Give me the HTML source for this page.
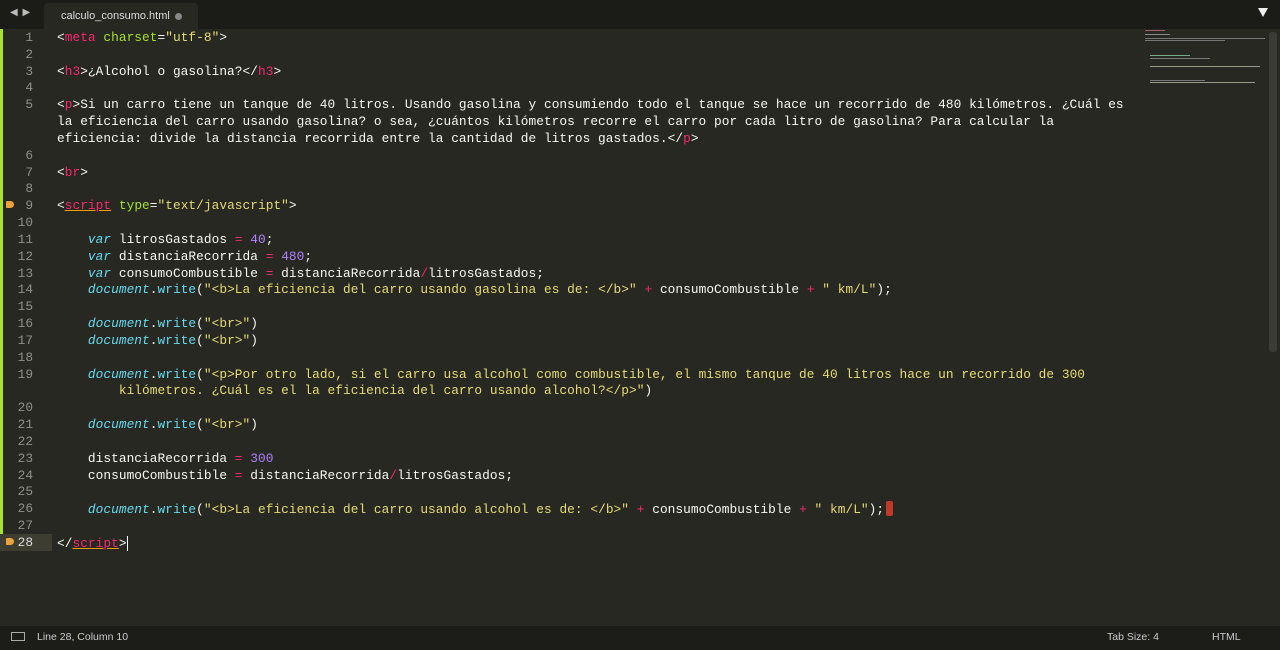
<!DOCTYPE html>
<html><head><meta charset="utf-8"><style>
body{margin:0;width:1280px;height:650px;background:#272822;overflow:hidden;position:relative;font-family:"Liberation Sans",sans-serif}
#tabs{position:absolute;left:0;top:0;width:1280px;height:29px;background:#1b1b18}
#tab{position:absolute;left:44px;top:3px;width:154px;height:26px;background:#272822;border-radius:4px 4px 0 0;color:#ddd;font-size:11px;line-height:26px}
#tab span{position:absolute;left:17px}
#tab i{position:absolute;left:131px;top:10px;width:7px;height:7px;border-radius:50%;background:#888}
#arr{position:absolute;left:10px;top:7px;color:#bbb;font-size:10px;letter-spacing:1px}
#dd{position:absolute;left:1258px;top:8px;width:0;height:0;border-left:5px solid transparent;border-right:5px solid transparent;border-top:9px solid #eee}
#green{position:absolute;left:0;top:29px;width:3px;height:521px;background:#a6e22e}
#gut{position:absolute;left:0;top:30px;width:33px;text-align:right;color:#8f908a;font:12.8px/16.83px "Liberation Mono",monospace;white-space:pre}
#code{position:absolute;left:57px;top:30px;color:#f8f8f2;font:12.8px/16.83px "Liberation Mono",monospace;white-space:pre;letter-spacing:0.05px}
.t{color:#f92672}.a{color:#a6e22e}.s{color:#e6db74}.n{color:#ae81ff}.k{color:#66d9ef;font-style:italic}.o{color:#f92672}
.u{text-decoration:underline;text-decoration-color:#e6a000}
.cur{display:inline-block;width:7px;height:15px;background:#c0392b;border-radius:2px;vertical-align:-3px;margin-left:2px}
#hl{position:absolute;left:0;top:534px;width:52px;height:17px;background:#3e3d32}
.tag{position:absolute;width:8px;height:7px;background:#e8a33d;border-radius:1px 4px 4px 1px}
#sb{position:absolute;left:0;top:626px;width:1280px;height:24px;background:#1c1c19;color:#ccc;font-size:10.5px;line-height:22px}
#scroll{position:absolute;left:1269px;top:32px;width:8px;height:320px;background:#3a3b35;border-radius:3px}
.mm{position:absolute;height:1px}
</style></head><body>
<div id="tabs"><div id="arr">◀ ▶</div><div id="tab"><span>calculo_consumo.html</span><i></i></div><div id="dd"></div></div>
<div id="green"></div>
<div id="hl"></div>
<div class="tag" style="left:6px;top:201px"></div>
<div class="tag" style="left:6px;top:538px"></div>
<div id="gut">1
2
3
4
5


6
7
8
9
10
11
12
13
14
15
16
17
18
19

20
21
22
23
24
25
26
27
<span style="color:#ddd">28</span></div>
<div id="code">&lt;<span class="t">meta</span> <span class="a">charset</span>=<span class="s">"utf-8"</span>&gt;

&lt;<span class="t">h3</span>&gt;¿Alcohol o gasolina?&lt;/<span class="t">h3</span>&gt;

&lt;<span class="t">p</span>&gt;Si un carro tiene un tanque de 40 litros. Usando gasolina y consumiendo todo el tanque se hace un recorrido de 480 kilómetros. ¿Cuál es
la eficiencia del carro usando gasolina? o sea, ¿cuántos kilómetros recorre el carro por cada litro de gasolina? Para calcular la
eficiencia: divide la distancia recorrida entre la cantidad de litros gastados.&lt;/<span class="t">p</span>&gt;

&lt;<span class="t">br</span>&gt;

&lt;<span class="t u">script</span> <span class="a">type</span>=<span class="s">"text/javascript"</span>&gt;

    <span class="k">var</span> litrosGastados <span class="o">=</span> <span class="n">40</span>;
    <span class="k">var</span> distanciaRecorrida <span class="o">=</span> <span class="n">480</span>;
    <span class="k">var</span> consumoCombustible <span class="o">=</span> distanciaRecorrida<span class="o">/</span>litrosGastados;
    <span class="k">document</span>.<span style="color:#66d9ef">write</span>(<span class="s">"&lt;b&gt;La eficiencia del carro usando gasolina es de: &lt;/b&gt;"</span> <span class="o">+</span> consumoCombustible <span class="o">+</span> <span class="s">" km/L"</span>);

    <span class="k">document</span>.<span style="color:#66d9ef">write</span>(<span class="s">"&lt;br&gt;"</span>)
    <span class="k">document</span>.<span style="color:#66d9ef">write</span>(<span class="s">"&lt;br&gt;"</span>)

    <span class="k">document</span>.<span style="color:#66d9ef">write</span>(<span class="s">"&lt;p&gt;Por otro lado, si el carro usa alcohol como combustible, el mismo tanque de 40 litros hace un recorrido de 300</span>
<span class="s">        kilómetros. ¿Cuál es el la eficiencia del carro usando alcohol?&lt;/p&gt;"</span>)

    <span class="k">document</span>.<span style="color:#66d9ef">write</span>(<span class="s">"&lt;br&gt;"</span>)

    distanciaRecorrida <span class="o">=</span> <span class="n">300</span>
    consumoCombustible <span class="o">=</span> distanciaRecorrida<span class="o">/</span>litrosGastados;

    <span class="k">document</span>.<span style="color:#66d9ef">write</span>(<span class="s">"&lt;b&gt;La eficiencia del carro usando alcohol es de: &lt;/b&gt;"</span> <span class="o">+</span> consumoCombustible <span class="o">+</span> <span class="s">" km/L"</span>);<span class="cur"></span>

&lt;/<span class="t u">script</span>&gt;<span style="border-left:1px solid #fff"></span></div>
<div id="scroll"></div>
<div class="mm" style="left:1145px;top:30px;width:20px;background:#a06060"></div>
<div class="mm" style="left:1145px;top:34px;width:25px;background:#888"></div>
<div class="mm" style="left:1145px;top:38px;width:120px;background:#777"></div>
<div class="mm" style="left:1145px;top:40px;width:80px;background:#777"></div>
<div class="mm" style="left:1150px;top:55px;width:40px;background:#7a8"></div>
<div class="mm" style="left:1150px;top:58px;width:60px;background:#777"></div>
<div class="mm" style="left:1150px;top:66px;width:110px;background:#998"></div>
<div class="mm" style="left:1150px;top:80px;width:55px;background:#777"></div>
<div class="mm" style="left:1150px;top:82px;width:105px;background:#998"></div>
<div id="sb"><span style="position:absolute;left:11px;top:6px;width:14px;height:9px;border:1px solid #aaa;box-sizing:border-box"></span><span style="position:absolute;left:37px">Line 28, Column 10</span><span style="position:absolute;left:1107px">Tab Size: 4</span><span style="position:absolute;left:1212px">HTML</span></div>
</body></html>
